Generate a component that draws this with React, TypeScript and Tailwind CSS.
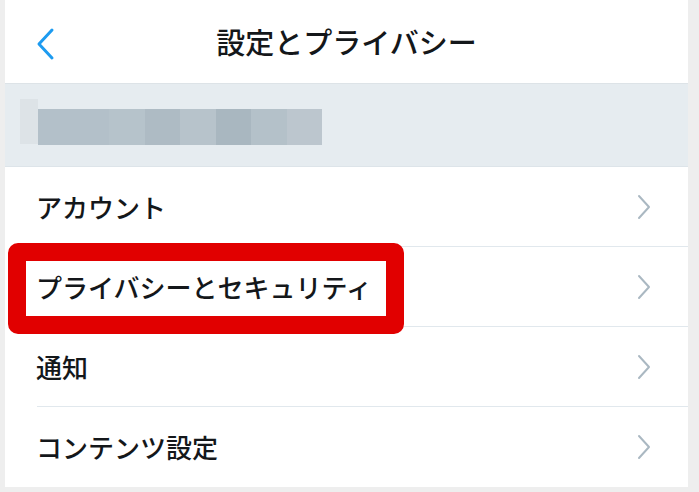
import React from "react";

const font = { fontFamily: '"Noto Sans CJK JP", "Noto Sans", sans-serif' };

function ChevronRight() {
  return (
    <svg width="16" height="26" viewBox="0 0 16 26" fill="none">
      <path d="M3 2 L13 13 L3 24" stroke="#aab8c2" strokeWidth="2" strokeLinecap="round" strokeLinejoin="round" />
    </svg>
  );
}

function Row({ label, last }: { label: string; last?: boolean }) {
  return (
    <div className="relative h-[80px] flex items-center pl-[31px] pr-[36px]">
      <span className="text-[26px] font-medium text-[#14171a] flex-1 leading-none">{label}</span>
      <ChevronRight />
      {!last && <div className="absolute left-[32px] right-0 bottom-0 h-px bg-[#e1e8ed]" />}
    </div>
  );
}

export default function App() {
  const blocks = ["#b3c0c9", "#b3c0c9", "#b6c3cb", "#aebbc4", "#b7c3cb", "#a9b7c0", "#b4c1c9", "#bcc6ce"];
  return (
    <div className="relative w-[699px] h-[492px] overflow-hidden bg-[#eeeeee] pl-[5px] pr-[11px]" style={font}>
      <div className="bg-white">
        <div className="relative h-[84px] flex items-center justify-center border-b border-[#dde3e7]">
          <svg className="absolute left-[28px] top-[27px]" width="26" height="34" viewBox="0 0 26 34" fill="none">
            <path d="M19 3 L6 17 L19 31" stroke="#1d9bf0" strokeWidth="3" strokeLinecap="round" strokeLinejoin="round" />
          </svg>
          <span className="text-[29px] font-medium text-[#14171a] leading-none">設定とプライバシー</span>
        </div>
        <div className="h-[83px] bg-[#e6ecf0] border-b border-[#dde4e9] flex items-start pt-[15px] pl-[15px]">
          <div className="w-[18px] h-[45px] bg-[#dde3e7]" />
          <div className="flex mt-[10px] h-[36px]">
            {blocks.map((c, i) => (
              <div key={i} className="w-[35.5px] h-full" style={{ backgroundColor: c }} />
            ))}
          </div>
        </div>
        <Row label="アカウント" />
        <Row label="プライバシーとセキュリティ" />
        <Row label="通知" />
        <Row label="コンテンツ設定" last />
      </div>
      <div className="absolute left-[8px] top-[243px] w-[396px] h-[91px] rounded-[10px] border-[18px] border-[#e10000]" />
    </div>
  );
}
